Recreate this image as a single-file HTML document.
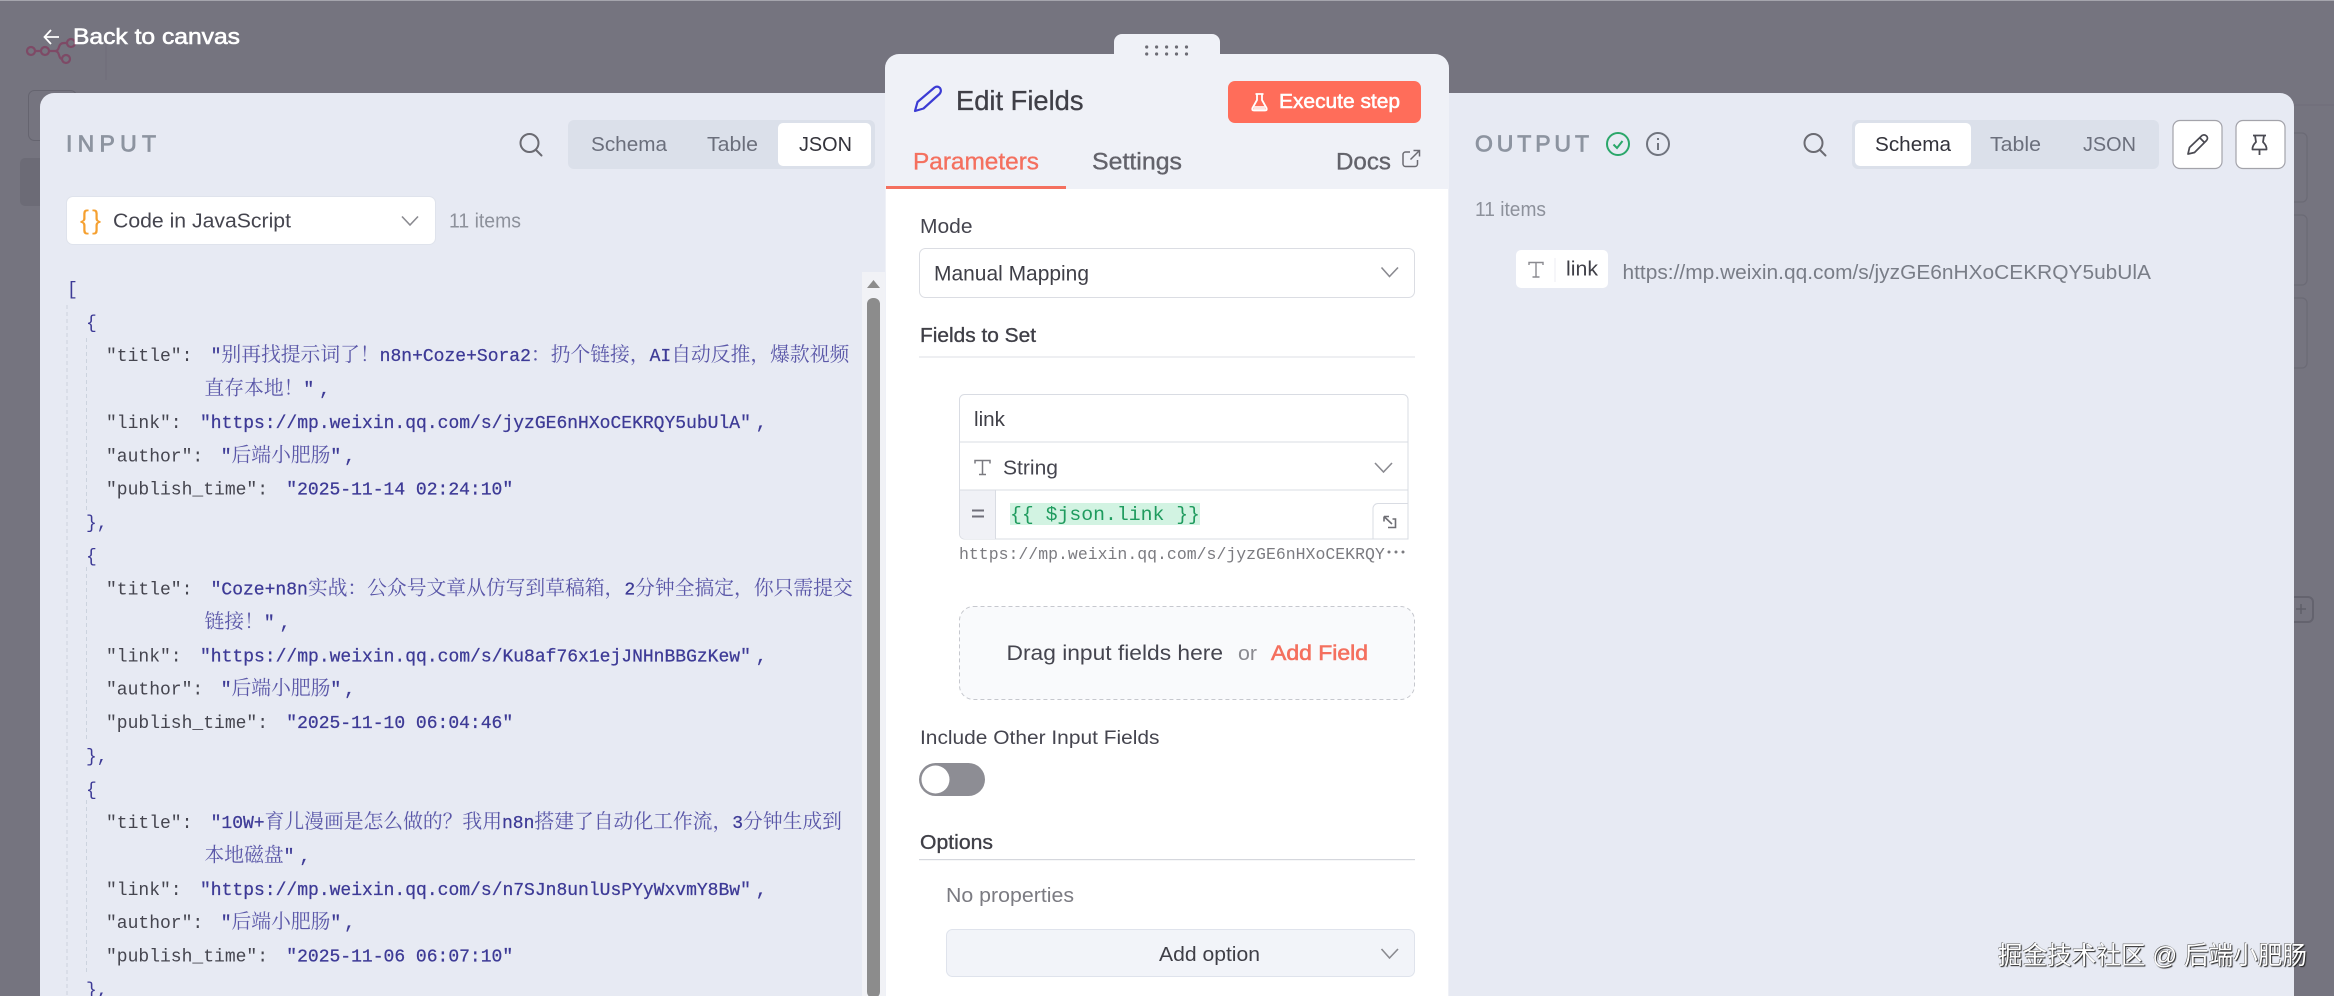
<!DOCTYPE html>
<html lang="zh"><head><meta charset="utf-8"><title>Edit Fields</title>
<style>
html,body{margin:0;padding:0;width:2334px;height:996px;overflow:hidden;background:#75747f}
svg{display:block;position:absolute;left:0;top:0}
text{font-family:"Liberation Sans","Noto Sans CJK SC",sans-serif;white-space:pre}
.k,.v,.p{font-family:"Liberation Mono","Noto Serif CJK SC",monospace;font-size:18px}
.k{fill:#45454f}
.v,.p{fill:#3d3a96}
.v{stroke:#3d3a96;stroke-width:.25}
.c{font-family:"Noto Serif CJK SC",serif;font-size:19.8px;fill:#5a57a8;stroke:none}
.g{fill:none;stroke:#ccd3de;stroke-width:1;stroke-dasharray:4 3}
.ch{fill:none;stroke:#8a8a90;stroke-width:1.6}
.ic{fill:none;stroke:#6b6b72;stroke-width:2;stroke-linecap:round;stroke-linejoin:round}
.m{stroke:currentColor;stroke-width:.35}
</style></head><body>
<svg width="2334" height="996" viewBox="0 0 2334 996" xmlns="http://www.w3.org/2000/svg">
<!-- backdrop -->
<rect x="0" y="0" width="2334" height="996" fill="#75747f"/>
<rect x="0" y="0" width="2334" height="1" fill="#a5a5ad"/>
<g fill="none" stroke="#7e4a66" stroke-width="2.2">
<circle cx="31" cy="51" r="4"/><circle cx="45" cy="51" r="4"/><circle cx="71" cy="43" r="4"/><circle cx="66" cy="59" r="4"/>
<path d="M35 51h6M49 51h6q3 0 4-4q1-4 5-4h3M55 51q3 0 4 4q1 4 3 4"/>
</g>
<path d="M106 44V80" stroke="#6e6d78" stroke-width="1"/>
<rect x="28.500" y="90.500" width="48" height="50" rx="6" fill="none" stroke="#65646f"/>
<rect x="20" y="158" width="30" height="48" rx="5" fill="#6c6b76"/>
<path d="M2294 105H2334" stroke="#6e6d78"/>
<g fill="none" stroke="#6b6a75" stroke-width="1.2">
<rect x="2285" y="133" width="22" height="69" rx="5"/><rect x="2285" y="215" width="22" height="70" rx="5"/><rect x="2285" y="298" width="22" height="70" rx="5"/>
</g>
<rect x="2285" y="597" width="28" height="25" rx="5" fill="none" stroke="#64636e" stroke-width="2"/>
<path d="M2296 609h10M2301 604v10" stroke="#5f5e69" stroke-width="1.5"/>

<path d="M40 999V107a14 14 0 0 1 14-14H885V999Z" fill="#e7eaf3"/>
<path d="M1440 93H2280a14 14 0 0 1 14 14V999H1440Z" fill="#e7eaf3"/>

<path d="M45 37H59M51 30L44.500 37L51 44" fill="none" stroke="#fff" stroke-width="1.8"/>
<text x="73" y="44" font-size="22.500" fill="#fff" stroke="#fff" stroke-width=".6" textLength="167" lengthAdjust="spacingAndGlyphs">Back to canvas</text>

<!-- INPUT header -->
<text x="66" y="151.500" font-size="23" fill="#8d94a0" stroke="#8d94a0" stroke-width=".8" textLength="90" lengthAdjust="spacing">INPUT</text>
<circle cx="529.500" cy="143" r="9" class="ic"/><path d="M536 150L541.500 155.500" class="ic"/>
<rect x="568" y="120" width="307" height="49" rx="6" fill="#dbe0ea"/>
<rect x="778" y="123" width="93" height="43" rx="5" fill="#fff"/>
<text x="591" y="151" font-size="20.500" fill="#6b6f7c" textLength="76" lengthAdjust="spacingAndGlyphs">Schema</text>
<text x="707" y="151" font-size="20.500" fill="#6b6f7c" textLength="51" lengthAdjust="spacingAndGlyphs">Table</text>
<text x="799" y="151" font-size="20.500" fill="#33333b" textLength="53" lengthAdjust="spacingAndGlyphs">JSON</text>

<rect x="66" y="196" width="370" height="49" rx="7" fill="#dfe3ec"/>
<rect x="67" y="197" width="368" height="47" rx="6" fill="#fff"/>
<text x="80" y="229" font-size="27" fill="#f5a030" textLength="21" lengthAdjust="spacing">{}</text>
<text x="113" y="227.500" font-size="20.500" fill="#45454f" textLength="178" lengthAdjust="spacingAndGlyphs">Code in JavaScript</text>
<path d="M402 216.500L410 225L418 216.500" class="ch"/>
<text x="449" y="227.500" font-size="20.500" fill="#8d919b" textLength="72" lengthAdjust="spacingAndGlyphs">11 items</text>

<!-- JSON -->
<path d="M67 305V996" class="g"/>
<path d="M86.500 338V510M86.500 567V740M86.500 800V975" class="g"/>
<g transform="translate(-1 -.5)">
<text class="p" x="68" y="295">[</text>
<text class="p" x="87" y="328.350">{</text>

<text class="k" x="107" y="361.700">"title":</text>
<text class="v" x="211.600" y="361.700">"<tspan class="c">别再找提示词了！</tspan>n8n+Coze+Sora2<tspan class="c">：扔个链接，</tspan>AI<tspan class="c">自动反推，爆款视频</tspan></text>
<text class="v" x="205.500" y="395"><tspan class="c">直存本地！</tspan>"<tspan dx="5">,</tspan></text>
<text class="k" x="107" y="428.400">"link":</text>
<text class="v" x="201" y="428.400">"https://mp.weixin.qq.com/s/jyzGE6nHXoCEKRQY5ubUlA"<tspan dx="5">,</tspan></text>
<text class="k" x="107" y="461.750">"author":</text>
<text class="v" x="221.700" y="461.750">"<tspan class="c">后端小肥肠</tspan>"<tspan dx="3">,</tspan></text>
<text class="k" x="107" y="495.100">"publish_time":</text>
<text class="v" x="287.300" y="495.100">"2025-11-14 02:24:10"</text>
<text class="p" x="87" y="528.450">},</text>
<text class="p" x="87" y="561.800">{</text>

<text class="k" x="107" y="595.150">"title":</text>
<text class="v" x="211.600" y="595.150">"Coze+n8n<tspan class="c">实战：公众号文章从仿写到草稿箱，</tspan>2<tspan class="c">分钟全搞定，你只需提交</tspan></text>
<text class="v" x="205.500" y="628.500"><tspan class="c">链接！</tspan>"<tspan dx="5">,</tspan></text>
<text class="k" x="107" y="661.850">"link":</text>
<text class="v" x="201" y="661.850">"https://mp.weixin.qq.com/s/Ku8af76x1ejJNHnBBGzKew"<tspan dx="5">,</tspan></text>
<text class="k" x="107" y="695.200">"author":</text>
<text class="v" x="221.700" y="695.200">"<tspan class="c">后端小肥肠</tspan>"<tspan dx="3">,</tspan></text>
<text class="k" x="107" y="728.550">"publish_time":</text>
<text class="v" x="287.300" y="728.550">"2025-11-10 06:04:46"</text>
<text class="p" x="87" y="761.900">},</text>
<text class="p" x="87" y="795.250">{</text>

<text class="k" x="107" y="828.600">"title":</text>
<text class="v" x="211.600" y="828.600">"10W+<tspan class="c">育儿漫画是怎么做的？我用</tspan>n8n<tspan class="c">搭建了自动化工作流，</tspan>3<tspan class="c">分钟生成到</tspan></text>
<text class="v" x="205.500" y="861.950"><tspan class="c">本地磁盘</tspan>"<tspan dx="5">,</tspan></text>
<text class="k" x="107" y="895.300">"link":</text>
<text class="v" x="201" y="895.300">"https://mp.weixin.qq.com/s/n7SJn8unlUsPYyWxvmY8Bw"<tspan dx="5">,</tspan></text>
<text class="k" x="107" y="928.650">"author":</text>
<text class="v" x="221.700" y="928.650">"<tspan class="c">后端小肥肠</tspan>"<tspan dx="3">,</tspan></text>
<text class="k" x="107" y="962">"publish_time":</text>
<text class="v" x="287.300" y="962">"2025-11-06 06:07:10"</text>
<text class="p" x="87" y="995.350">},</text>
</g>

<!-- scrollbar -->
<rect x="862" y="272" width="24" height="724" fill="#f1f2f6"/>
<path d="M867 288L873.500 280L880 288Z" fill="#8c8c8c"/>
<rect x="867" y="298" width="13" height="700" rx="6" fill="#8c8c8c"/>

<!-- OUTPUT header -->
<text x="1475" y="151.500" font-size="23" fill="#8d94a0" stroke="#8d94a0" stroke-width=".8" textLength="114" lengthAdjust="spacing">OUTPUT</text>
<circle cx="1618" cy="144" r="11" fill="none" stroke="#2ba76a" stroke-width="2"/>
<path d="M1613.500 144.500L1617 148L1622.500 141" fill="none" stroke="#2ba76a" stroke-width="2"/>
<circle cx="1658" cy="144" r="11" fill="none" stroke="#70747e" stroke-width="2"/>
<path d="M1658 143V150M1658 138V140" stroke="#70747e" stroke-width="2"/>
<circle cx="1813.500" cy="143" r="9" class="ic"/><path d="M1820 150L1825.500 155.500" class="ic"/>
<rect x="1852" y="120" width="307" height="49" rx="6" fill="#dbe0ea"/>
<rect x="1855" y="123" width="116" height="43" rx="5" fill="#fff"/>
<text x="1875" y="151" font-size="20.500" fill="#33333b" textLength="76" lengthAdjust="spacingAndGlyphs">Schema</text>
<text x="1990" y="151" font-size="20.500" fill="#6b6f7c" textLength="51" lengthAdjust="spacingAndGlyphs">Table</text>
<text x="2083" y="151" font-size="20.500" fill="#6b6f7c" textLength="53" lengthAdjust="spacingAndGlyphs">JSON</text>
<rect x="2173" y="120.500" width="49" height="48" rx="7" fill="#fff" stroke="#a3a3aa" stroke-width="1.2"/>
<rect x="2236" y="120.500" width="49" height="48" rx="7" fill="#fff" stroke="#a3a3aa" stroke-width="1.2"/>
<path d="M2188 154L2189.500 147.500L2202 135.500Q2204.500 134 2206.500 136Q2208.500 138 2206.500 140.500L2194.500 152.500Z M2200 138L2204.500 142.500" fill="none" stroke="#4a4a52" stroke-width="1.700" stroke-linejoin="round"/>
<path d="M2253 135.500H2266M2255 135.500L2256 142Q2252 146 2252.500 149.500H2266.500Q2267 146 2263 142L2264 135.500M2259.500 149.500V155" fill="none" stroke="#4a4a52" stroke-width="1.800" stroke-linejoin="round"/>
<text x="1475" y="216" font-size="20" fill="#8d919b" textLength="71" lengthAdjust="spacingAndGlyphs">11 items</text>
<rect x="1516" y="250" width="92" height="38" rx="5" fill="#fff"/>
<path d="M1555 258V282" stroke="#eceef3"/>
<path d="M1529 265V262.500H1543V265M1536 262.500V277M1532.500 277H1539.500" fill="none" stroke="#8a8a90" stroke-width="1.4"/>
<text x="1566" y="275.500" font-size="20" fill="#3f3f47" textLength="32" lengthAdjust="spacingAndGlyphs">link</text>
<text x="1622.500" y="279" font-size="20" fill="#797d87" textLength="528.500" lengthAdjust="spacingAndGlyphs">https://mp.weixin.qq.com/s/jyzGE6nHXoCEKRQY5ubUlA</text>

<!-- middle panel -->
<path d="M885 1000V68a14 14 0 0 1 14-14H1435a14 14 0 0 1 14 14V1000Z" fill="#eff1f7"/>
<path d="M1114 60V42a8 8 0 0 1 8-8H1212a8 8 0 0 1 8 8V60Z" fill="#eff1f7"/>
<rect x="886" y="189" width="562" height="810" fill="#fff"/>
<g fill="#6c6c74"><circle cx="1146.700" cy="47" r="1.600"/><circle cx="1156.600" cy="47" r="1.600"/><circle cx="1166.600" cy="47" r="1.600"/><circle cx="1176.500" cy="47" r="1.600"/><circle cx="1186.500" cy="47" r="1.600"/><circle cx="1146.700" cy="54" r="1.600"/><circle cx="1156.600" cy="54" r="1.600"/><circle cx="1166.600" cy="54" r="1.600"/><circle cx="1176.500" cy="54" r="1.600"/><circle cx="1186.500" cy="54" r="1.600"/></g>
<path d="M915 111L917.500 102L934.500 87.500Q937.500 85.500 940 88Q942 91 939.500 94L923.500 108.500Z" fill="none" stroke="#3b3bd4" stroke-width="2.200" stroke-linejoin="round"/>
<text x="956" y="110" font-size="27.500" fill="#3f3f47" stroke="#3f3f47" stroke-width=".3" textLength="127.500" lengthAdjust="spacingAndGlyphs">Edit Fields</text>
<rect x="1228" y="81" width="193" height="42" rx="7" fill="#ff6d5a"/>
<path d="M1255.500 94H1263.500M1257 94V100L1252.500 108Q1251.500 110.500 1254 110.500H1265Q1267.500 110.500 1266.500 108L1262 100V94" fill="none" stroke="#fff" stroke-width="1.800" stroke-linejoin="round"/>
<path d="M1254.500 106H1264.500L1266 110H1253Z" fill="#fff" fill-opacity=".8"/>
<text x="1279" y="108" font-size="20.500" fill="#fff" stroke="#fff" stroke-width=".55" textLength="121" lengthAdjust="spacingAndGlyphs">Execute step</text>
<text x="913" y="169.500" font-size="24" fill="#f4705f" class="m" style="color:#f4705f" textLength="126" lengthAdjust="spacingAndGlyphs">Parameters</text>
<text x="1092" y="169.500" font-size="24" fill="#63636b" class="m" style="color:#63636b" textLength="90" lengthAdjust="spacingAndGlyphs">Settings</text>
<text x="1336" y="169.500" font-size="24" fill="#63636b" class="m" style="color:#63636b" textLength="55" lengthAdjust="spacingAndGlyphs">Docs</text>
<path d="M1410 152H1405.500A2.500 2.500 0 0 0 1403 154.500V164A2.500 2.500 0 0 0 1405.500 166.500H1415A2.500 2.500 0 0 0 1417.500 164V160M1410.500 159.500L1419 151M1413.500 150.500H1419.500V156.500" fill="none" stroke="#6b6b72" stroke-width="1.500"/>
<rect x="886" y="186" width="180" height="3" fill="#f4705f"/>

<text x="920" y="233" font-size="20" fill="#45454f" textLength="52.500" lengthAdjust="spacingAndGlyphs">Mode</text>
<rect x="919.500" y="248.500" width="495" height="49" rx="6" fill="#fff" stroke="#dbdde3" stroke-width="1"/>
<text x="934" y="280.500" font-size="21" fill="#3f3f47" textLength="155" lengthAdjust="spacingAndGlyphs">Manual Mapping</text>
<path d="M1381.500 267.500L1389.500 276.500L1398 267.500" class="ch"/>
<text x="920" y="342" font-size="20" fill="#3f3f47" class="m" style="color:#3f3f47" textLength="116" lengthAdjust="spacingAndGlyphs">Fields to Set</text>
<rect x="919" y="356.500" width="496" height="1" fill="#dcdfe5"/>

<path d="M964.500 394.500H1403a5 5 0 0 1 5 5V539H964.500a5 5 0 0 1 -5 -5V399.500a5 5 0 0 1 5 -5Z" fill="#fff" stroke="#d9dce3"/>
<path d="M960 442H1408M960 490H1408" stroke="#d9dce3"/>
<path d="M960 490.500H995.500V539H964.500a5 5 0 0 1 -4.500 -5Z" fill="#f0f1f6"/>
<path d="M995.500 490V539" stroke="#d9dce3"/>
<text x="974" y="426" font-size="20.500" fill="#3f3f47" textLength="31" lengthAdjust="spacingAndGlyphs">link</text>
<path d="M975 463.500V460.500H990V463.500M982.500 460.500V474.500M979 474.500H986" fill="none" stroke="#7a7a80" stroke-width="1.500"/>
<text x="1003" y="474.500" font-size="20.500" fill="#45454f" textLength="55" lengthAdjust="spacingAndGlyphs">String</text>
<path d="M1375 463L1383.500 472L1392 463" class="ch"/>
<path d="M972 510.500H984M972 516.500H984" stroke="#70707a" stroke-width="2"/>
<rect x="1010" y="503" width="190" height="22" fill="#d2f3e2"/>
<text x="1010" y="520" style="font-family:'Liberation Mono',monospace" font-size="19.800" fill="#1f9b5e">{{ $json.link }}</text>
<path d="M1408 503.500H1378a5 5 0 0 0 -5 5V539H1408Z" fill="#fff" stroke="#d9dce3"/>
<path d="M1384 516.500L1392 524M1384 516.500H1389M1384 516.500V521.500M1388 527.500H1395.500V519H1392.500" fill="none" stroke="#6e6e74" stroke-width="1.600"/>
<text x="959" y="559" style="font-family:'Liberation Mono',monospace" font-size="16.500" fill="#7b7b80">https://mp.weixin.qq.com/s/jyzGE6nHXoCEKRQY</text>
<g fill="#7b7b80"><circle cx="1389" cy="552" r="1.500"/><circle cx="1396" cy="552" r="1.500"/><circle cx="1403" cy="552" r="1.500"/></g>

<rect x="959.500" y="606.500" width="455" height="93" rx="14" fill="#f9fafc" stroke="#c6c8ce" stroke-dasharray="4 3"/>
<text x="1006.500" y="660" font-size="21" fill="#45454f" textLength="216.500" lengthAdjust="spacingAndGlyphs">Drag input fields here</text>
<text x="1238" y="660" font-size="20" fill="#8a8a90" textLength="19" lengthAdjust="spacingAndGlyphs">or</text>
<text x="1271" y="660" font-size="21" fill="#f4705f" stroke="#f4705f" stroke-width=".6" textLength="97" lengthAdjust="spacingAndGlyphs">Add Field</text>

<text x="920" y="744" font-size="19.500" fill="#45454f" textLength="239.500" lengthAdjust="spacingAndGlyphs">Include Other Input Fields</text>
<rect x="919" y="763" width="66" height="33" rx="16.500" fill="#8d8d94"/>
<circle cx="935.500" cy="779.500" r="14" fill="#fff"/>
<text x="920" y="849" font-size="20.500" fill="#3f3f47" class="m" style="color:#3f3f47" textLength="73" lengthAdjust="spacingAndGlyphs">Options</text>
<rect x="919" y="859" width="496" height="1.200" fill="#d5d7dd"/>
<text x="946" y="902" font-size="20" fill="#7b7b82" textLength="128" lengthAdjust="spacingAndGlyphs">No properties</text>
<rect x="946.500" y="929.500" width="468" height="47" rx="6" fill="#f2f4f9" stroke="#dfe3ec"/>
<text x="1159" y="961" font-size="20.500" fill="#3f3f47" textLength="101" lengthAdjust="spacingAndGlyphs">Add option</text>
<path d="M1381.500 949L1389.500 958L1398 949" class="ch"/>

<!-- watermark -->
<text x="1998" y="964" font-size="25" fill="#fff" style="text-shadow:1px 1px 1px #222,-.5px -.5px 0 #555" textLength="309" lengthAdjust="spacingAndGlyphs">掘金技术社区 @ 后端小肥肠</text>
</svg>
</body></html>
